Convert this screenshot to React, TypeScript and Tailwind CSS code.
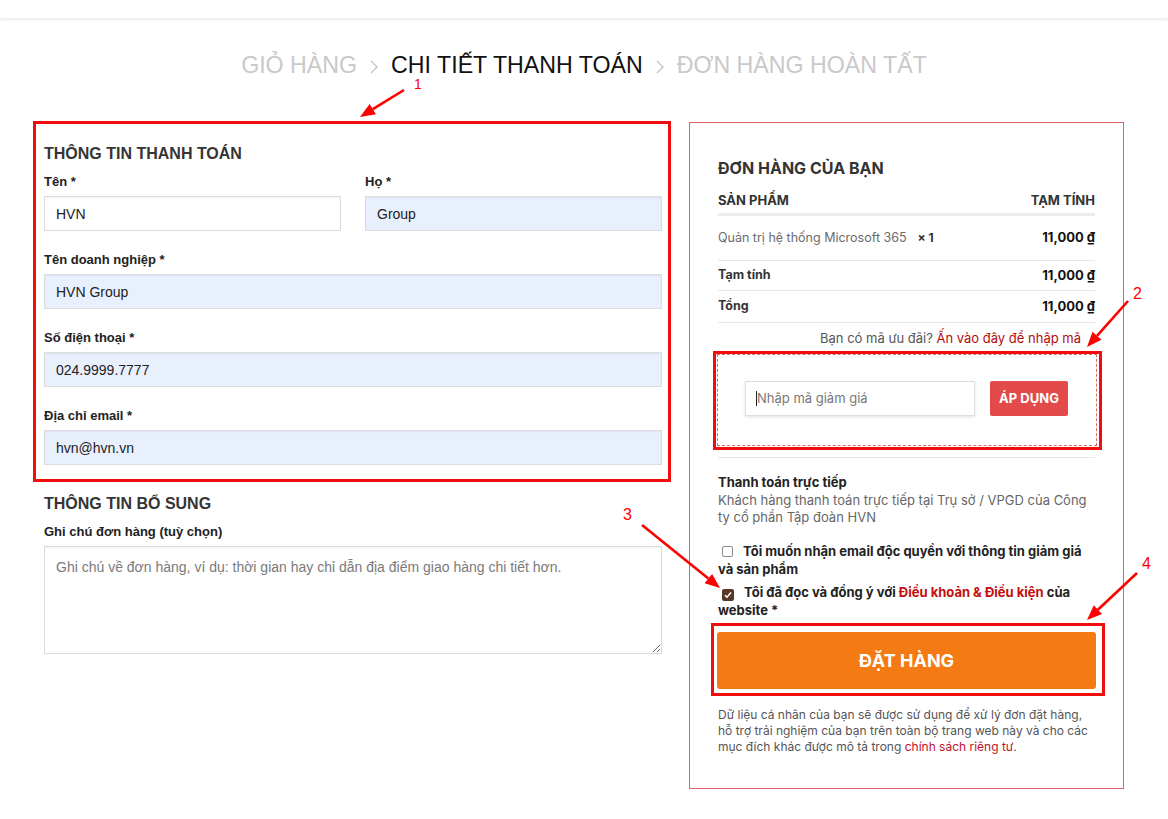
type FieldProps = {
  label: string;
  value: string;
  autofill?: boolean;
};

function Field({ label, value, autofill = true }: FieldProps) {
  return (
    <div>
      <label className="block text-[13px] font-bold leading-5 text-[#222] mb-1">{label}</label>
      <input
        readOnly
        value={value}
        className={`block w-full h-[35px] border border-[#dcdcdc] px-[11px] text-[14px] text-[#222] outline-none shadow-[inset_0_1px_2px_rgba(0,0,0,0.05)] ${
          autofill ? "bg-[#e8f0fe]" : "bg-white"
        }`}
      />
    </div>
  );
}

function Chevron() {
  return (
    <svg width="10" height="16" viewBox="0 0 10 16" className="mt-[3px]">
      <polyline points="2,2 8,8 2,14" fill="none" stroke="#c4c4c4" strokeWidth="1.4" />
    </svg>
  );
}

function Breadcrumb() {
  return (
    <div className="mt-[37px] flex items-center justify-center gap-3 text-[23.2px] leading-[20px] uppercase">
      <span className="text-[#c9c9c9]">Giỏ hàng</span>
      <Chevron />
      <span className="text-[#111]">Chi tiết thanh toán</span>
      <Chevron />
      <span className="text-[#c9c9c9]">Đơn hàng hoàn tất</span>
    </div>
  );
}

function BillingForm() {
  return (
    <div className="w-[638px]">
      {/* annotated box 1 */}
      <div className="border-[3px] border-[#f20d0d] pt-[18px] pb-[14px] pl-[8px] pr-[6px]">
        <h3 className="text-[16px] font-bold leading-6 text-[#353535] mb-[6px]">THÔNG TIN THANH TOÁN</h3>
        <div className="grid grid-cols-2 gap-x-6 mb-[19px]">
          <Field label="Tên *" value="HVN" autofill={false} />
          <Field label="Họ *" value="Group" />
        </div>
        <div className="space-y-[19px]">
          <Field label="Tên doanh nghiệp *" value="HVN Group" />
          <Field label="Số điện thoại *" value="024.9999.7777" />
          <Field label="Địa chỉ email *" value="hvn@hvn.vn" />
        </div>
      </div>

      <div className="mt-[10px] pl-[11px] pr-[9px]">
        <h3 className="text-[16px] font-bold leading-6 text-[#353535] mb-[6px]">THÔNG TIN BỔ SUNG</h3>
        <label className="block text-[13px] font-bold leading-5 text-[#222] mb-1">Ghi chú đơn hàng (tuỳ chọn)</label>
        <textarea
          placeholder="Ghi chú về đơn hàng, ví dụ: thời gian hay chỉ dẫn địa điểm giao hàng chi tiết hơn."
          className="block w-full h-[108px] border border-[#dcdcdc] bg-white px-[11px] pt-[10px] text-[14px] leading-5 text-[#222] placeholder:text-[#7a7a7a] outline-none shadow-[inset_0_1px_2px_rgba(0,0,0,0.05)]"
        />
      </div>
    </div>
  );
}

function OrderSummary() {
  return (
    <div className="mt-px w-[435px] border border-[#e06464] px-7 pt-[33px] pb-[33px] font-['Inter',sans-serif]">
      <h3 className="text-[16px] font-bold leading-6 text-[#333]">ĐƠN HÀNG CỦA BẠN</h3>

      {/* table */}
      <div className="mt-[10px] flex justify-between text-[13px] font-bold leading-5 text-[#333] pb-[3px] border-b-[3px] border-[#ececec]">
        <span>SẢN PHẨM</span>
        <span>TẠM TÍNH</span>
      </div>
      <div className="h-[45px] flex items-center justify-between border-b border-[#e6e6e6] text-[13px]">
        <span className="text-[12.5px] text-[#6b6b6b]">
          Quản trị hệ thống Microsoft 365
          <strong className="ml-[11px] text-[12px] text-[#333]">× 1</strong>
        </span>
        <span className="font-bold text-[#111]">11,000 ₫</span>
      </div>
      <div className="h-[30px] flex items-center justify-between border-b border-[#e6e6e6] text-[13px] font-bold">
        <span className="text-[12.5px] text-[#333]">Tạm tính</span>
        <span className="text-[#111]">11,000 ₫</span>
      </div>
      <div className="h-[32px] flex items-center justify-between border-b border-[#e6e6e6] text-[13px] font-bold">
        <span className="text-[12.5px] text-[#333]">Tổng</span>
        <span className="text-[#111]">11,000 ₫</span>
      </div>

      <p className="mt-[5px] pr-[14px] text-right text-[13px] leading-5 text-[#555]">
        Bạn có mã ưu đãi? <span className="text-[#b30d0d]">Ấn vào đây để nhập mã</span>
      </p>

      {/* annotated box 2: coupon */}
      <div className="mt-[3px] -ml-[5px] -mr-[7px] border-[3px] border-[#f20d0d] pl-px pr-[2px] pb-px">
        <div className="h-[92px] border border-dashed border-[#cf7070] pl-[27px] pt-[26px] flex items-start">
          <div className="w-[230px] h-[35px] border border-[#dedede] bg-white flex items-center pl-[10px] shadow-[0_1px_3px_rgba(0,0,0,0.12)]">
            <span className="w-px h-[15px] bg-[#222]" />
            <span className="text-[13px] text-[#777]">Nhập mã giảm giá</span>
          </div>
          <button className="ml-[15px] w-[78px] h-[35px] rounded-[2px] bg-[#e24b4a] text-[13px] font-bold text-white">
            ÁP DỤNG
          </button>
        </div>
      </div>

      <div className="mt-[7px] border-t border-[#e6e6e6]" />

      <p className="mt-[14px] text-[13px] font-bold leading-5 text-[#222]">Thanh toán trực tiếp</p>
      <p className="text-[13px] leading-[17px] text-[#666]">
        Khách hàng thanh toán trực tiếp tại Trụ sở / VPGD của Công
        <br />
        ty cổ phần Tập đoàn HVN
      </p>

      <p className="mt-4 text-[13px] font-bold leading-[18px] text-[#222]">
        <span className="inline-block align-[-1px] ml-[4px] mr-[10px] w-[11px] h-[11px] rounded-[2px] border border-[#8a8a8a] bg-white" />
        Tôi muốn nhận email độc quyền với thông tin giảm giá
        <br />
        và sản phẩm
      </p>
      <p className="mt-[5px] text-[13px] font-bold leading-[18px] text-[#222]">
        <span className="inline-flex align-[-2px] ml-[4px] mr-[10px] w-[12px] h-[12px] rounded-[2px] bg-[#5a3826] items-center justify-center">
          <svg width="8" height="8" viewBox="0 0 8 8">
            <polyline points="1,4.2 3,6.2 7,1.6" fill="none" stroke="#fff" strokeWidth="1.6" />
          </svg>
        </span>
        Tôi đã đọc và đồng ý với <span className="text-[#c40d0d]">Điều khoản &amp; Điều kiện</span> của
        <br />
        website *
      </p>

      {/* annotated box 4: place order */}
      <div className="mt-[4px] -ml-[7px] -mr-[10px] border-[3px] border-[#f20d0d] pl-[3px] pr-[6px] pt-[6px] pb-[4px]">
        <button className="w-full h-[57px] rounded-[3px] bg-[#f47b14] text-[18px] font-bold text-white">ĐẶT HÀNG</button>
      </div>

      <p className="mt-[11px] whitespace-nowrap text-[12px] leading-4 text-[#555]">
        Dữ liệu cá nhân của bạn sẽ được sử dụng để xử lý đơn đặt hàng,
        <br />
        hỗ trợ trải nghiệm của bạn trên toàn bộ trang web này và cho các
        <br />
        mục đích khác được mô tả trong <span className="text-[#c0102b]">chính sách riêng tư</span>.
      </p>
    </div>
  );
}

type ArrowProps = { x1: number; y1: number; x2: number; y2: number };

function Arrow({ x1, y1, x2, y2 }: ArrowProps) {
  const a = Math.atan2(y2 - y1, x2 - x1);
  const len = 15;
  const half = 6;
  const bx = x2 - len * Math.cos(a);
  const by = y2 - len * Math.sin(a);
  const px = -Math.sin(a) * half;
  const py = Math.cos(a) * half;
  return (
    <g>
      <line x1={x1} y1={y1} x2={bx} y2={by} stroke="#f00" strokeWidth="2.6" />
      <polygon points={`${x2},${y2} ${bx + px},${by + py} ${bx - px},${by - py}`} fill="#f00" />
    </g>
  );
}

function Annotations() {
  return (
    <svg
      className="absolute inset-0 pointer-events-none"
      width="1168"
      height="819"
      viewBox="0 0 1168 819"
      fontFamily="'Liberation Sans', Arial, sans-serif"
    >
      <text x="414" y="89" fontSize="14" fill="#f00">1</text>
      <Arrow x1={404} y1={90} x2={360} y2={117} />
      <text x="1133" y="299" fontSize="16" fill="#f00">2</text>
      <Arrow x1={1128} y1={301} x2={1087} y2={347} />
      <text x="623" y="520" fontSize="16" fill="#f00">3</text>
      <Arrow x1={642} y1={525} x2={720} y2={588} />
      <text x="1142" y="569" fontSize="16" fill="#f00">4</text>
      <Arrow x1={1137} y1={573} x2={1087} y2={620} />
    </svg>
  );
}

export default function App() {
  return (
    <div className="relative min-h-[819px] bg-white font-['Liberation_Sans',Arial,sans-serif]">
      <div className="h-[18px] bg-white shadow-[0_1px_4px_rgba(0,0,0,0.12)]" />
      <Breadcrumb />
      <div className="mt-[46px] flex items-start gap-[18px] pl-[33px]">
        <BillingForm />
        <OrderSummary />
      </div>
      <Annotations />
    </div>
  );
}
